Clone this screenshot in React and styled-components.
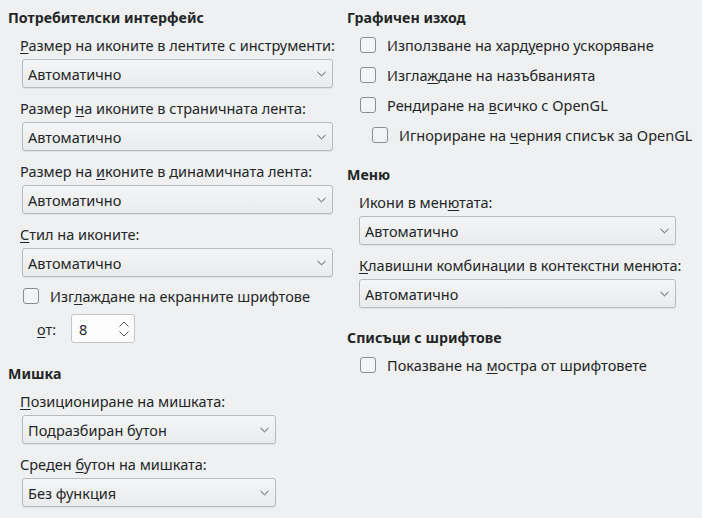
import React from 'react';
import styled, { createGlobalStyle } from 'styled-components';

const GlobalStyle = createGlobalStyle`
  html, body {
    margin: 0;
    padding: 0;
    background: #eff0f1;
  }
  body {
    font-family: "Noto Sans", "Open Sans", sans-serif;
    font-size: 14.5px;
    color: #232627;
  }
`;

const Page = styled.div`
  display: grid;
  grid-template-columns: 339px 1fr;
  width: 702px;
  height: 518px;
  box-sizing: border-box;
  padding: 8px 0 0 8px;
  overflow: hidden;
`;

const Column = styled.div`
  display: flex;
  flex-direction: column;
`;

const SectionTitle = styled.div`
  font-size: 14.2px;
  font-weight: 700;
  line-height: 20px;
  white-space: nowrap;
  margin-top: ${props => props.$top || 0}px;
`;

const Group = styled.div`
  display: flex;
  flex-direction: column;
  padding-left: ${props => props.$indent || 12}px;
`;

const FieldLabel = styled.div`
  line-height: 20px;
  white-space: nowrap;
  margin-top: ${props => props.$top ?? 10}px;
  margin-bottom: 4px;
`;

const Key = styled.span`
  text-decoration: underline;
  text-underline-offset: 2px;
  text-decoration-thickness: 1px;
`;

const Combo = styled.div`
  display: flex;
  align-items: center;
  justify-content: space-between;
  box-sizing: border-box;
  width: ${props => props.$width}px;
  height: 29px;
  margin-left: ${props => props.$shift || 0}px;
  padding: 0 6px 0 5px;
  border: 1px solid #b9babb;
  border-radius: 3px;
  background: linear-gradient(#f4f5f6, #eaebec);
  box-shadow: 0 1px 1px rgba(0, 0, 0, 0.07);
  white-space: nowrap;
`;

const CheckRow = styled.div`
  display: flex;
  align-items: center;
  gap: 11px;
  line-height: 20px;
  white-space: nowrap;
  margin-top: ${props => props.$top ?? 10}px;
  margin-left: ${props => props.$indent || 0}px;
`;

const Box = styled.span`
  box-sizing: border-box;
  width: 16px;
  height: 16px;
  border: 1px solid #8b8d8f;
  border-radius: 3px;
  background: #f3f4f5;
  flex: none;
`;

const SpinRow = styled.div`
  display: flex;
  align-items: center;
  margin-top: 8px;
  padding-left: 17px;
  line-height: 20px;
`;

const SpinLabel = styled.span`
  width: 34px;
`;

const SpinBox = styled.div`
  display: flex;
  align-items: center;
  justify-content: space-between;
  box-sizing: border-box;
  width: 64px;
  height: 29px;
  padding: 0 5px 0 7px;
  border: 1px solid #c3c5c6;
  border-radius: 3px;
  background: #fcfcfc;
`;

const Chevron = () => (
  <svg width="9" height="6" viewBox="0 0 9 6">
    <path d="M0.5 1 L4.5 4.8 L8.5 1" fill="none" stroke="#4d4f51" strokeWidth="1" />
  </svg>
);

const SpinArrows = () => (
  <svg width="10" height="16" viewBox="0 0 10 16">
    <path d="M0.5 5.5 L5 1 L9.5 5.5" fill="none" stroke="#4d4f51" strokeWidth="1" />
    <path d="M0.5 10.5 L5 15 L9.5 10.5" fill="none" stroke="#4d4f51" strokeWidth="1" />
  </svg>
);

const Select = ({ value, width, shift }) => (
  <Combo $width={width} $shift={shift}>
    <span>{value}</span>
    <Chevron />
  </Combo>
);

const Check = ({ children, top, indent }) => (
  <CheckRow $top={top} $indent={indent}>
    <Box />
    <span>{children}</span>
  </CheckRow>
);

const App = () => (
  <>
    <GlobalStyle />
    <Page>
      <Column>
        <SectionTitle>Потребителски интерфейс</SectionTitle>
        <Group $indent={12}>
          <FieldLabel $top={7}>
            <Key>Р</Key>азмер на иконите в лентите с инструменти:
          </FieldLabel>
          <Select value="Автоматично" width={311} shift={2} />
          <FieldLabel>
            Размер <Key>н</Key>а иконите в страничната лента:
          </FieldLabel>
          <Select value="Автоматично" width={311} shift={2} />
          <FieldLabel>
            Размер на <Key>и</Key>коните в динамичната лента:
          </FieldLabel>
          <Select value="Автоматично" width={311} shift={2} />
          <FieldLabel>
            <Key>С</Key>тил на иконите:
          </FieldLabel>
          <Select value="Автоматично" width={311} shift={2} />
          <Check top={9} indent={3}>
            Изг<Key>л</Key>аждане на екранните шрифтове
          </Check>
          <SpinRow>
            <SpinLabel>
              <Key>о</Key>т:
            </SpinLabel>
            <SpinBox>
              <span>8</span>
              <SpinArrows />
            </SpinBox>
          </SpinRow>
        </Group>
        <SectionTitle $top={21}>Мишка</SectionTitle>
        <Group $indent={12}>
          <FieldLabel $top={7}>
            <Key>П</Key>озициониране на мишката:
          </FieldLabel>
          <Select value="Подразбиран бутон" width={254} shift={2} />
          <FieldLabel>
            Среден <Key>б</Key>утон на мишката:
          </FieldLabel>
          <Select value="Без функция" width={254} shift={2} />
        </Group>
      </Column>
      <Column>
        <SectionTitle>Графичен изход</SectionTitle>
        <Group $indent={13}>
          <Check top={7}>
            Използване на хард<Key>у</Key>ерно ускоряване
          </Check>
          <Check>
            Изгла<Key>ж</Key>дане на назъбванията
          </Check>
          <Check>
            Рендиране на <Key>в</Key>сичко с OpenGL
          </Check>
          <Check indent={12}>
            Игнориране на <Key>ч</Key>ерния списък за OpenGL
          </Check>
        </Group>
        <SectionTitle $top={20}>Меню</SectionTitle>
        <Group $indent={12}>
          <FieldLabel $top={7}>
            Икони в мен<Key>ю</Key>тата:
          </FieldLabel>
          <Select value="Автоматично" width={317} />
          <FieldLabel>
            <Key>К</Key>лавишни комбинации в контекстни менюта:
          </FieldLabel>
          <Select value="Автоматично" width={317} />
        </Group>
        <SectionTitle $top={20}>Списъци с шрифтове</SectionTitle>
        <Group $indent={13}>
          <Check top={7}>
            Показване на <Key>м</Key>остра от шрифтовете
          </Check>
        </Group>
      </Column>
    </Page>
  </>
);

export default App;
